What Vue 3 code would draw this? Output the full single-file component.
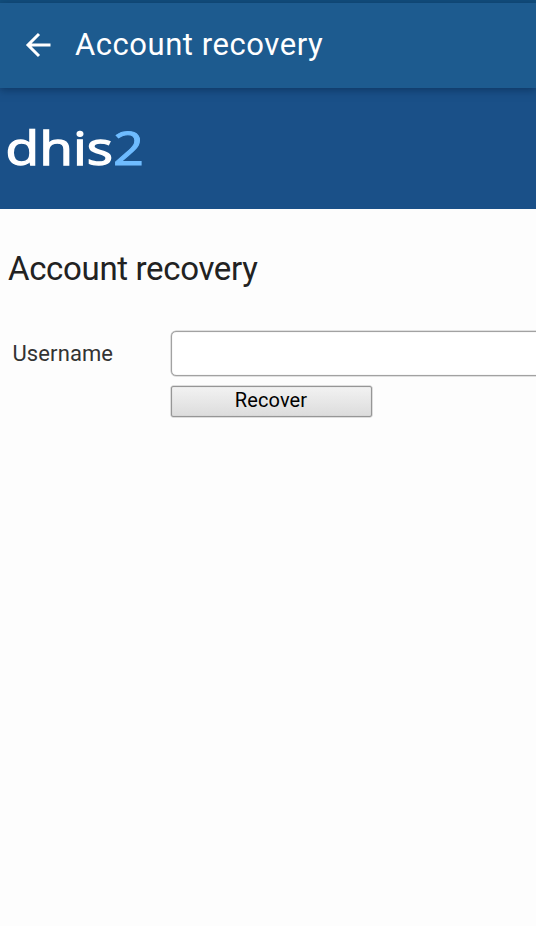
<script setup>
import { ref } from 'vue'

const username = ref('')
</script>

<template>
  <div class="screen">
    <div class="status-edge"></div>
    <header class="app-bar">
      <svg class="back" viewBox="0 0 26 26" aria-hidden="true">
        <path d="M25.5 13H4M14 2L3 13L14 24" />
      </svg>
      <span class="title">Account recovery</span>
    </header>
    <div class="banner">
      <svg class="logo" viewBox="0 0 160 80" role="img">
        <text class="logo-name" x="5.5" y="53.5" textLength="107.5" lengthAdjust="spacingAndGlyphs">dhis</text>
        <text class="logo-number" x="113" y="53.5" textLength="31" lengthAdjust="spacingAndGlyphs">2</text>
      </svg>
    </div>
    <main class="content">
      <h1 class="heading">Account recovery</h1>
      <form class="form" @submit.prevent>
        <label class="label" for="username">Username</label>
        <input id="username" v-model="username" class="field" type="text" />
        <button class="submit" type="submit">Recover</button>
      </form>
    </main>
  </div>
</template>

<style>
body {
  background: #fdfdfd;
  overflow: hidden;
}
</style>

<style scoped>
.screen {
  height: 926px;
  overflow: hidden;
  background: #fdfdfd;
  font-family: Roboto, 'Liberation Sans', sans-serif;
}
.status-edge {
  height: 3px;
  background: #124e7d;
}
.app-bar {
  position: relative;
  display: flex;
  align-items: center;
  box-sizing: border-box;
  height: 85px;
  padding: 0 0 1px 25px;
  background: #1d5b8f;
  box-shadow: 0 2px 8px rgba(8, 42, 78, 0.65);
}
.back {
  flex: none;
  width: 26px;
  height: 26px;
  fill: none;
  stroke: #fff;
  stroke-width: 3;
}
.title {
  margin-left: 24px;
  color: #fff;
  font-size: 31px;
  line-height: 36px;
  letter-spacing: 0.55px;
  white-space: nowrap;
}
.banner {
  box-sizing: border-box;
  height: 121px;
  padding-top: 23px;
  background: #1a5088;
}
.logo {
  display: block;
  width: 160px;
  height: 80px;
  overflow: visible;
  font-family: 'Open Sans', 'Noto Sans', sans-serif;
  font-size: 46px;
  font-weight: 400;
}
.logo-name {
  fill: #fff;
  stroke: #fff;
  stroke-width: 1.3px;
}
.logo-number {
  fill: #6fbcff;
  stroke: #6fbcff;
  stroke-width: 1px;
}
.content {
  padding: 40px 0 0 8px;
}
.heading {
  margin: 0;
  color: #222;
  font-size: 33px;
  font-weight: 400;
  line-height: 40px;
  letter-spacing: -0.34px;
  white-space: nowrap;
}
.form {
  display: grid;
  grid-template-columns: 158px 386px;
  grid-template-rows: 45px 32px;
  row-gap: 9.5px;
  margin-top: 42px;
  padding-left: 4.5px;
}
.label {
  align-self: center;
  color: #333;
  font-size: 22px;
  line-height: 26px;
  letter-spacing: 0.1px;
}
.field {
  box-sizing: border-box;
  width: 100%;
  height: 45px;
  padding: 0 8px;
  border: 1px solid #a2a2a2;
  border-radius: 5px;
  outline: none;
  background: #fff;
  box-shadow: 0 0 0 0.5px #c4c4c4, inset 0 0 1px #bbb;
  font: inherit;
  font-size: 22px;
}
.submit {
  grid-column: 2;
  box-sizing: border-box;
  width: 201px;
  height: 31px;
  padding: 0 0 3px;
  border: 1px solid #969696;
  border-radius: 2px;
  background: linear-gradient(#f2f2f2, #dcdcdc);
  box-shadow: 0 0 0 0.5px #c0c0c0, inset 0 0 1px #aaa;
  color: #000;
  font: inherit;
  font-size: 20px;
  line-height: 24px;
  letter-spacing: 0.1px;
}
</style>
